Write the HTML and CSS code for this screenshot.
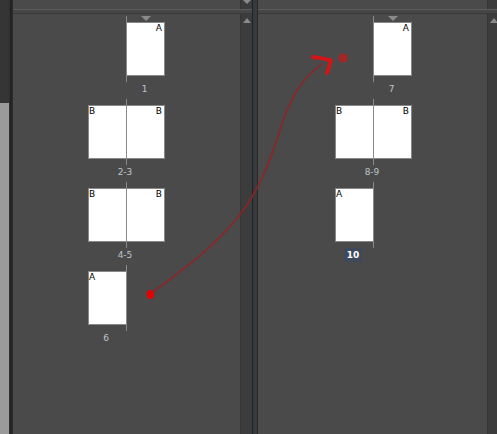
FILE: index.html
```html
<!DOCTYPE html>
<html>
<head>
<meta charset="utf-8">
<link rel="stylesheet" href="styles.css">
</head>
<body>
<div class="app">
  <div class="strip"><div class="strip-top"></div><div class="strip-bottom"></div></div>
  <div class="edge"></div>

  <section class="pane pane-left">
    <div class="pane-top"><div class="fill"></div><div class="sb sb-top"><span class="arrow-down"></span></div></div>
    <div class="band"></div>
    <div class="main">
      <div class="content">
        <div class="spread">
          <div class="page r first"><span class="mark">A</span></div>
          <div class="spine"></div>
          <div class="label c2">1</div>
        </div>
        <div class="spread">
          <div class="page l"><span class="mark">B</span></div>
          <div class="page r"><span class="mark">B</span></div>
          <div class="spine"></div>
          <div class="label both">2-3</div>
        </div>
        <div class="spread">
          <div class="page l"><span class="mark">B</span></div>
          <div class="page r"><span class="mark">B</span></div>
          <div class="spine"></div>
          <div class="label both">4-5</div>
        </div>
        <div class="spread">
          <div class="page l"><span class="mark">A</span></div>
          <div class="spine"></div>
          <div class="label c1">6</div>
        </div>
      </div>
      <div class="sb"><span class="arrow-up"></span></div>
    </div>
  </section>

  <div class="splitter"></div>

  <section class="pane pane-right">
    <div class="pane-top"><div class="fill"></div><div class="sb sb-top"></div></div>
    <div class="band"></div>
    <div class="main">
      <div class="content content-right">
        <div class="spread">
          <div class="page r first"><span class="mark">A</span></div>
          <div class="spine"></div>
          <div class="label c2">7</div>
        </div>
        <div class="spread">
          <div class="page l"><span class="mark">B</span></div>
          <div class="page r"><span class="mark">B</span></div>
          <div class="spine"></div>
          <div class="label both">8-9</div>
        </div>
        <div class="spread">
          <div class="page l"><span class="mark">A</span></div>
          <div class="spine"></div>
          <div class="label c1"><span class="current">10</span></div>
        </div>
      </div>
      <div class="sb"><span class="arrow-up"></span></div>
    </div>
  </section>

  <svg class="ink" width="497" height="434" viewBox="0 0 497 434">
    <path d="M150,294 C180,272 228,238 252,197 C268,170 274,148 282,124 C290,100 300,80 322,64" fill="none" stroke="#8e2424" stroke-opacity="0.8" stroke-width="2" stroke-linecap="round"/>
    <path d="M313,57 Q322,58 331,60.5 L327,73" fill="none" stroke="#d01616" stroke-width="4" stroke-linecap="round" stroke-linejoin="round"/>
    <ellipse cx="150.3" cy="294.5" rx="3.6" ry="4.5" fill="#e60000"/>
    <circle cx="343" cy="58" r="4.5" fill="#b02222" fill-opacity="0.9"/>
  </svg>
</div>
</body>
</html>
```

FILE: styles.css
```css
html, body {
  margin: 0;
  padding: 0;
}
body {
  width: 497px;
  height: 434px;
  overflow: hidden;
  background: #4a4a4a;
  font-family: "DejaVu Sans", "Liberation Sans", sans-serif;
}
.app {
  position: relative;
  display: flex;
  width: 499px;
  height: 434px;
}
.strip {
  width: 9px;
  display: flex;
  flex-direction: column;
}
.strip-top {
  height: 103px;
  background: #353535;
}
.strip-bottom {
  flex: 1;
  background: #9a9a9a;
}
.edge {
  width: 4px;
  background: linear-gradient(to right, #303030 0 1px, #232323 1px 3px, #2c2c2c 3px 4px);
}
.pane {
  display: flex;
  flex-direction: column;
  background: #4a4a4a;
}
.pane-left {
  width: 239px;
}
.pane-right {
  width: 241px;
}
.splitter {
  width: 6px;
  background: linear-gradient(to right, #222 0 1px, #2d3a4e 1px 2px, #3a3a3a 2px 5px, #282828 5px 6px);
}
.pane-top {
  height: 9px;
  display: flex;
}
.pane-top .fill {
  flex: 1;
}
.band {
  height: 3px;
  border-top: 1px solid #5c5c5c;
  border-bottom: 1px solid #393939;
  background: #464646;
}
.main {
  flex: 1;
  display: flex;
}
.content {
  flex: 1;
  padding-top: 2px;
  display: flex;
  flex-direction: column;
  align-items: center;
}
.content-right {
  padding-left: 2px;
}
.sb {
  width: 11px;
  background: #3c3c3c;
  border-left: 1px solid #353535;
  display: flex;
  justify-content: center;
  align-items: flex-start;
}
.arrow-up {
  margin-top: 4px;
  width: 0;
  height: 0;
  border-left: 4px solid transparent;
  border-right: 4px solid transparent;
  border-bottom: 5px solid #8a8a8a;
}
.arrow-down {
  margin-top: 0;
  width: 0;
  height: 0;
  border-left: 4px solid transparent;
  border-right: 4px solid transparent;
  border-top: 4px solid #8a8a8a;
}
.spread {
  position: relative;
  display: grid;
  grid-template-columns: 38px 39px;
  grid-template-rows: 66px 17px;
}
.spine {
  position: absolute;
  left: 38px;
  top: 0;
  width: 1px;
  height: 66px;
  background: #8a8a8a;
}
.page {
  position: relative;
  grid-row: 1;
  align-self: start;
  margin-top: 6px;
  width: 37px;
  height: 52px;
  border: 1px solid #888;
  background: #fff;
  display: flex;
  align-items: flex-start;
  font-size: 9px;
  line-height: 9px;
  color: #000;
}
.page.l {
  grid-column: 1;
}
.page.r {
  grid-column: 2;
}
.page.r .mark {
  margin-left: auto;
  padding: 1px 2px 0 0;
}
.page.l .mark {
  padding: 1px 0 0 0;
}
.page.first::before {
  content: "";
  position: absolute;
  top: -7px;
  left: 14px;
  width: 0;
  height: 0;
  border-left: 5px solid transparent;
  border-right: 5px solid transparent;
  border-top: 5px solid #8a8a8a;
}
.label {
  grid-row: 2;
  align-self: start;
  text-align: center;
  padding-right: 2px;
  font-size: 9px;
  line-height: 14px;
  color: #bfc5cc;
}
.label.c1 {
  grid-column: 1;
}
.label.c2 {
  grid-column: 2;
}
.label.both {
  grid-column: 1 / 3;
  padding-right: 3px;
}
.current {
  display: inline-block;
  padding: 0 3px;
  background: #3e4a5c;
  color: #fff;
  font-weight: bold;
}
.ink {
  position: absolute;
  left: 0;
  top: 0;
  pointer-events: none;
}
```
